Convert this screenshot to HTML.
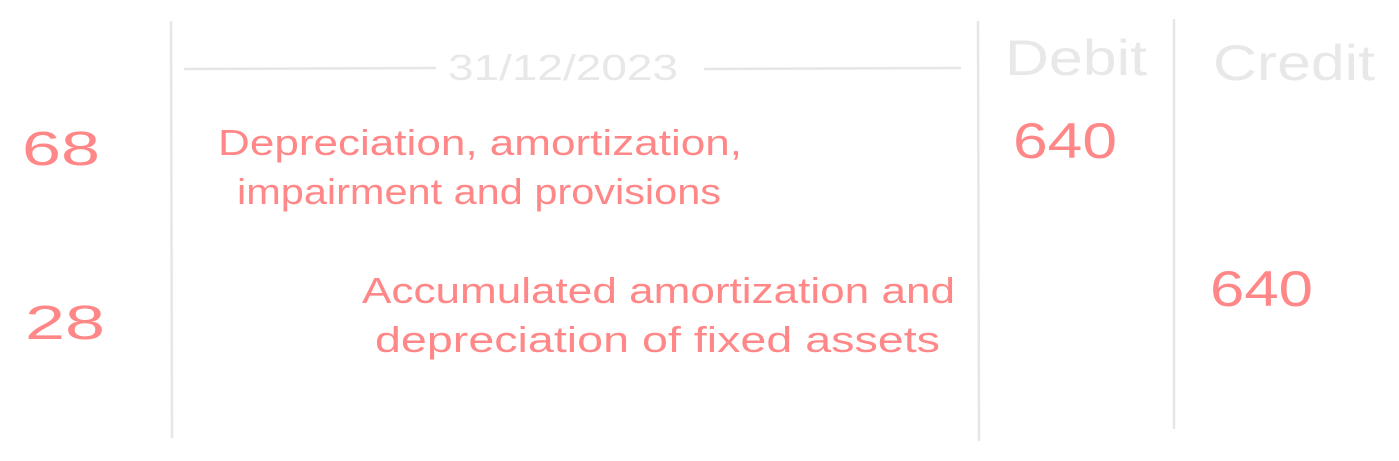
<!DOCTYPE html>
<html><head><meta charset="utf-8"><style>
html,body{margin:0;padding:0;background:#fff;width:1399px;height:461px;overflow:hidden}
text{font-family:"Liberation Sans",sans-serif}
</style></head><body>
<svg width="1399" height="461" viewBox="0 0 1399 461" xmlns="http://www.w3.org/2000/svg">
<g stroke="#e6e6e6" stroke-width="2.5" fill="none" stroke-linecap="round">
<path d="M171 22 L172 437"/>
<path d="M978 22 L979 440"/>
<path d="M1174 20 L1174 428"/>
<path d="M185 69 L435 68"/>
<path d="M705 69 L960 68"/>
</g>
<g fill="#e8e8e8">
<text x="448" y="80" font-size="36" textLength="230" lengthAdjust="spacingAndGlyphs">31/12/2023</text>
<text x="1005" y="75" font-size="50" textLength="142" lengthAdjust="spacingAndGlyphs">Debit</text>
<text x="1213" y="80" font-size="50" textLength="162" lengthAdjust="spacingAndGlyphs">Credit</text>
</g>
<g fill="#ff8787">
<text x="22" y="165" font-size="48" textLength="78" lengthAdjust="spacingAndGlyphs">68</text>
<text x="218" y="155" font-size="36" textLength="524" lengthAdjust="spacingAndGlyphs">Depreciation, amortization,</text>
<text x="237" y="204" font-size="36" textLength="484" lengthAdjust="spacingAndGlyphs">impairment and provisions</text>
<text x="1013" y="158" font-size="50" textLength="104" lengthAdjust="spacingAndGlyphs">640</text>
<text x="25" y="339" font-size="48" textLength="80" lengthAdjust="spacingAndGlyphs">28</text>
<text x="362" y="303" font-size="36" textLength="593" lengthAdjust="spacingAndGlyphs">Accumulated amortization and</text>
<text x="375" y="352" font-size="36" textLength="565" lengthAdjust="spacingAndGlyphs">depreciation of fixed assets</text>
<text x="1210" y="306" font-size="50" textLength="103" lengthAdjust="spacingAndGlyphs">640</text>
</g>
</svg>
</body></html>
